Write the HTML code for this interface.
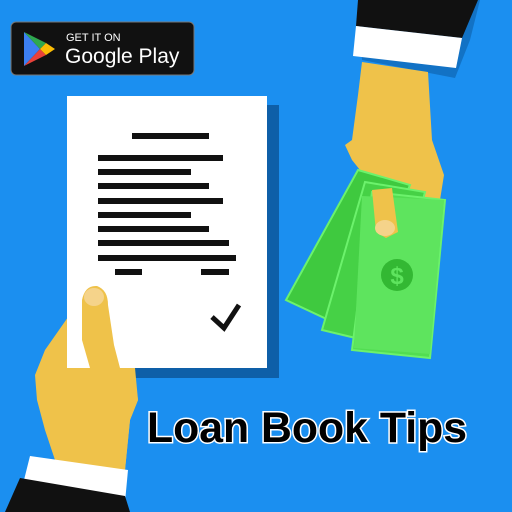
<!DOCTYPE html>
<html><head><style>
html,body{margin:0;padding:0;width:512px;height:512px;overflow:hidden;background:#1b8ff0}
</style></head><body>
<svg width="512" height="512" viewBox="0 0 512 512" xmlns="http://www.w3.org/2000/svg">
<rect width="512" height="512" fill="#1b8ff0"/>
<polygon points="358,0 480,0 470,40 455,78 362,60" fill="#0e5fa8" opacity="0.6"/>
<path d="M362,62 L428,72 L432,140 L444,175 L440,200 L420,215 L398,222 L396,236 L386,238 L376,230 L368,180 L352,160 L345,145 L352,140 L358,95 Z" fill="#efc24a"/>
<polygon points="358,0 478,0 462,38 356,26" fill="#111"/>
<polygon points="356,26 462,38 456,68 353,56" fill="#fff"/>
<g stroke="#6cf26c" stroke-width="2">
<polygon points="358,170 410,185 350,330 286,300" fill="#3fc93f"/>
<polygon points="365,182 425,192 385,345 322,330" fill="#46d146"/>
<polygon points="372,192 445,200 430,358 352,350" fill="#52dd52"/>
</g>
<polygon points="362,196 444,200 430,354 354,348" fill="#5ee45e"/>
<circle cx="397" cy="275" r="16" fill="#33b833"/>
<text x="397" y="284" font-family="Liberation Sans" font-weight="bold" font-size="24" fill="#5ee45e" text-anchor="middle">$</text>
<path d="M372,190 L392,188 L398,232 L386,238 L376,232 Z" fill="#efc24a"/>
<ellipse cx="385" cy="228" rx="10" ry="8" fill="#f5d38a"/>
<path d="M66,320 L80,300 L85,290 L100,288 L110,300 L115,340 L125,360 L135,380 L138,400 L130,420 L125,470 L55,460 L45,430 L37,400 L35,375 L45,350 Z" fill="#efc24a"/>
<rect x="75" y="105" width="204" height="273" fill="#0e5fa8"/>
<rect x="67" y="96" width="200" height="272" fill="#fff"/>
<g fill="#111">
<rect x="132" y="133" width="77" height="6"/>
<rect x="98" y="155" width="125" height="6"/>
<rect x="98" y="169" width="93" height="6"/>
<rect x="98" y="183" width="111" height="6"/>
<rect x="98" y="198" width="125" height="6"/>
<rect x="98" y="212" width="93" height="6"/>
<rect x="98" y="226" width="111" height="6"/>
<rect x="98" y="240" width="131" height="6"/>
<rect x="98" y="255" width="138" height="6"/>
<rect x="115" y="269" width="27" height="6"/>
<rect x="201" y="269" width="28" height="6"/>
</g>
<polyline points="212,317 224,328 239,305" fill="none" stroke="#111" stroke-width="5"/>
<path d="M82,300 Q85,285 97,286 Q108,290 108,305 L114,345 L120,368 L90,368 L82,340 Z" fill="#efc24a"/>
<path d="M68,368 L135,368 L138,400 L130,420 L125,470 L55,460 Z" fill="#efc24a"/>
<ellipse cx="94" cy="297" rx="10" ry="9" fill="#f5d38a"/>
<polygon points="30,456 128,470 125,502 22,488" fill="#fff"/>
<polygon points="20,478 125,496 130,512 5,512" fill="#111"/>
<rect x="11" y="22" width="183" height="53" rx="5" fill="#111" stroke="#777" stroke-width="1"/>
<polygon points="24,32 24,66 40,49" fill="#3c7ff2"/>
<polygon points="24,32 40,49 46,43" fill="#2fa84f"/>
<polygon points="24,66 40,49 46,55" fill="#e8413a"/>
<polygon points="40,49 46,43 55,49 46,55" fill="#fbbc04"/>
<text x="66" y="41" font-family="Liberation Sans" font-size="11" fill="#fff">GET IT ON</text>
<text x="65" y="63" font-family="Liberation Sans" font-size="21" fill="#fff">Google Play</text>
<text x="147" y="442" font-family="Liberation Sans" font-weight="bold" font-size="43" fill="#000" stroke="#fff" stroke-width="3" paint-order="stroke" textLength="320" lengthAdjust="spacingAndGlyphs">Loan Book Tips</text>
</svg>
</body></html>
